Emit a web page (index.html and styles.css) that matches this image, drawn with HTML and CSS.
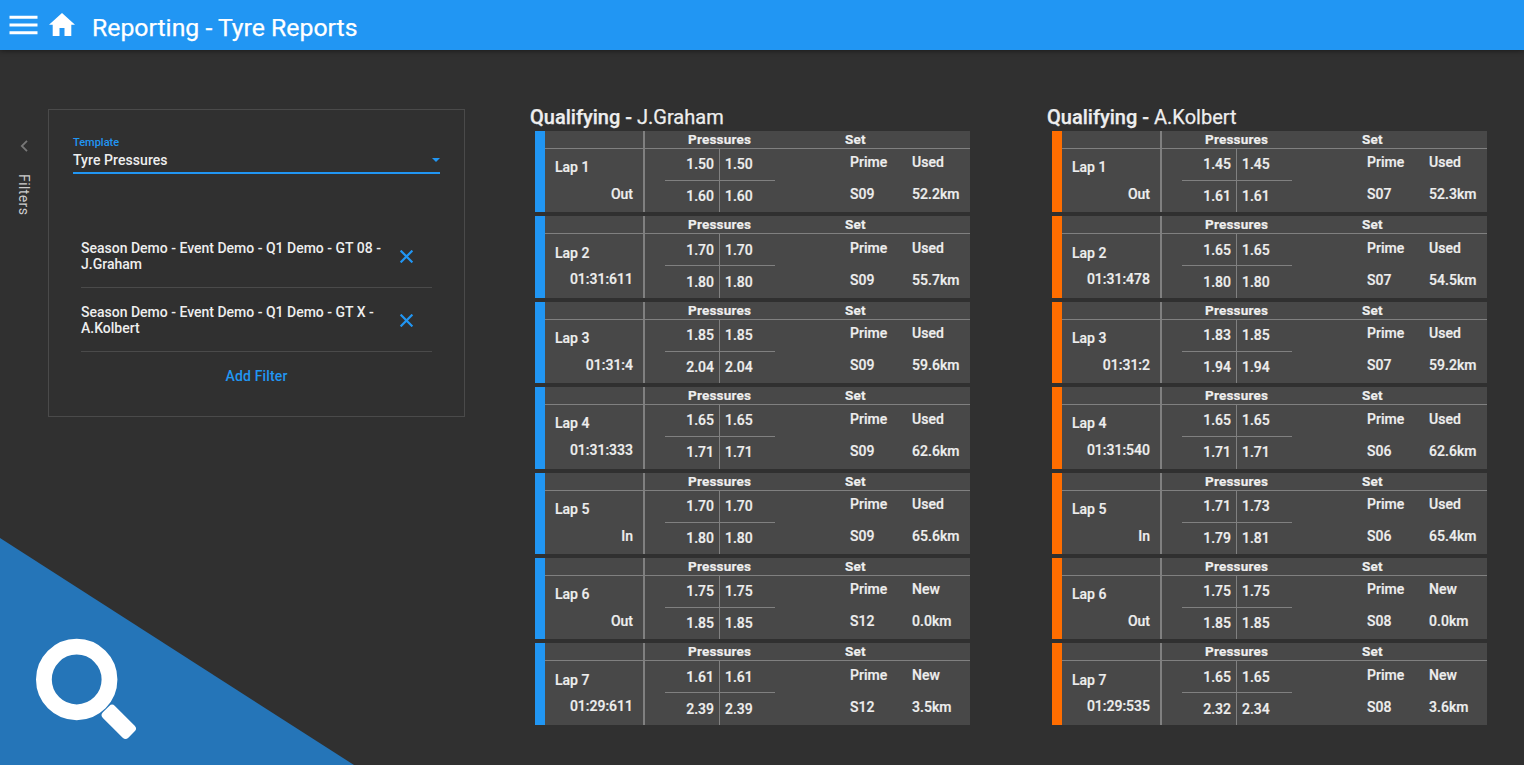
FILE: index.html
```html
<!DOCTYPE html>
<html lang="en">
<head>
<meta charset="utf-8">
<title>Reporting - Tyre Reports</title>
<link rel="stylesheet" href="styles.css">
</head>
<body>
<header class="topbar">
  <svg class="menu-icon" width="29" height="20" viewBox="0 0 29 20"><path d="M.5.7h28v3H.5zM.5 8.5h28v3H.5zM.5 16.3h28v3H.5z" fill="#fff"/></svg>
  <svg class="home-icon" width="26" height="23" viewBox="0 0 26 23"><path d="M13 0 0 11.8h3.7V23h6.8v-8h5v8h6.8V11.800H26z" fill="#fff"/></svg>
  <h1 class="title">Reporting - Tyre Reports</h1>
</header>
<main class="page">
  <aside class="rail">
    <svg width="8" height="12" viewBox="0 0 8 12"><path d="M7 .8 1.800 6 7 11.200" fill="none" stroke="#777" stroke-width="1.800"/></svg>
    <span class="rail-label">Filters</span>
  </aside>
  <section class="filters">
    <div class="select">
      <label class="select-label">Template</label>
      <div class="select-value"><span>Tyre Pressures</span><i class="caret"></i></div>
    </div>
    <ul class="filter-list">
      <li class="filter"><span class="filter-text">Season Demo - Event Demo - Q1 Demo - GT 08 - J.Graham</span><svg width="13" height="13" viewBox="0 0 13 13"><path d="M.6.6l11.800 11.800M12.400.6.6 12.400" stroke="#2196f3" stroke-width="2.200"/></svg></li>
      <li class="filter"><span class="filter-text">Season Demo - Event Demo - Q1 Demo - GT X - A.Kolbert</span><svg width="13" height="13" viewBox="0 0 13 13"><path d="M.6.6l11.800 11.800M12.400.6.6 12.400" stroke="#2196f3" stroke-width="2.200"/></svg></li>
    </ul>
    <div class="add">Add Filter</div>
  </section>
  <section class="report report-blue">
    <h2 class="driver"><b>Qualifying - </b>J.Graham</h2>
    <div class="laps" id="graham"></div>
  </section>
  <section class="report report-orange">
    <h2 class="driver"><b>Qualifying - </b>A.Kolbert</h2>
    <div class="laps" id="kolbert"></div>
  </section>
</main>
<svg class="corner" width="354" height="227" viewBox="0 0 354 227">
  <path d="M0 0 354 227H0z" fill="#2575b8"/>
  <circle cx="76.700" cy="141.500" r="32.800" fill="none" stroke="#fff" stroke-width="15.800"/>
  <rect x="-18" y="-8.500" width="36" height="17" rx="4" fill="#fff" transform="translate(118.800 183.800) rotate(45)"/>
</svg>
<script src="laps.js"></script>
</body>
</html>
```
FILE: styles.css
```css
* { box-sizing: border-box; }
body {
  margin: 0;
  height: 765px;
  overflow: hidden;
  background: #303030;
  color: #eee;
  font: 500 14px/16px Roboto, sans-serif;
}
.topbar {
  display: flex;
  height: 50px;
  padding-left: 9px;
  background: #2196f3;
  box-shadow: 0 1px 5px rgba(0, 0, 0, .45);
}
.menu-icon { margin-top: 15px; }
.home-icon { margin: 13px 0 0 11px; }
.title {
  margin: 12px 0 0 17px;
  color: #fff;
  font-size: 24.8px;
  font-weight: 400;
  -webkit-text-stroke: .25px #fff;
  line-height: 32px;
  white-space: nowrap;
}
.page { display: flex; align-items: flex-start; }
.rail {
  display: flex;
  flex-direction: column;
  align-items: center;
  width: 48px;
  padding-top: 90px;
}
.rail-label {
  margin: 22px 0 0;
  writing-mode: vertical-rl;
  color: #ccc;
  font-weight: 400;
  letter-spacing: .4px;
}
.filters {
  width: 417px;
  height: 308px;
  margin-top: 59px;
  padding: 27px 24px 0;
  border: 1px solid #4a4a4a;
}
.select { height: 37px; border-bottom: 2px solid #2196f3; }
.select-label {
  display: block;
  color: #2196f3;
  font-size: 11px;
  line-height: 12px;
}
.select-value {
  display: flex;
  justify-content: space-between;
  align-items: center;
  height: 22px;
  letter-spacing: .07px;
}
.caret {
  border: 4px solid transparent;
  border-top-color: #2196f3;
  border-bottom: 0;
}
.filter-list { margin: 50px 8px 0; padding: 0; list-style: none; }
.filter {
  display: flex;
  align-items: center;
  justify-content: space-between;
  height: 64px;
  padding: 0 19px 0 0;
  border-bottom: 1px solid #4a4a4a;
}
.filter svg { margin-top: 1px; }
.filter-text { width: 304px; }
.add { margin-top: 16px; color: #2196f3; text-align: center; letter-spacing: .15px; }
.report { width: 440px; margin: 54px 0 0 65px; }
.report-orange { margin-left: 77px; }
.driver {
  margin: 0;
  font-size: 20px;
  font-weight: 400;
  line-height: 27px;
  -webkit-text-stroke: .25px #eee;
}
.driver b { font-weight: 500; }
.laps { display: grid; gap: 4px; padding-left: 5px; -webkit-text-stroke: .2px #eee; }
.lap {
  display: grid;
  grid-template-columns: 100px 1fr;
  grid-template-rows: 100%;
  width: 435px;
  height: 81.4px;
  border-left: 10px solid #2196f3;
  background: #484848;
}
.report-orange .lap { border-color: #ff6d00; }
.lap-info { border-right: 2px solid #808080; }
.head { height: 18px; border-bottom: 1px solid #808080; font-size: 13.500px; line-height: 17px; font-weight: 700; letter-spacing: .22px; }
.name { padding: 10.300px 0 0 10px; }
.time { padding: 10.700px 10px 0 0; text-align: right; }
.lap-data .head { display: grid; grid-template-columns: 200px 1fr; }
.head span:first-child { padding-left: 43px; }
.values { display: grid; grid-template-columns: 110px 1fr; gap: 75px; padding-left: 20px; }
.pressures { display: grid; grid-template-columns: 55px 55px; grid-template-rows: 32px 31.4px; }
.pressures span { padding: 7.300px 5px 0; }
.pressures span:nth-child(odd) { border-right: 1px solid #808080; text-align: right; }
.pressures span:nth-child(-n+2) { border-bottom: 1px solid #808080; }
.set { display: grid; grid-template-columns: 62px 1fr; grid-template-rows: 32px 31.4px; height: 63px; padding-top: 5.400px; letter-spacing: .05px; }
.corner { position: absolute; left: 0; bottom: 0; }
```
FILE: laps.js
```js
const laps = {
  graham: [
    ["Out", "1.50 1.50 1.60 1.60", "Prime Used S09 52.2km"],
    ["01:31:611", "1.70 1.70 1.80 1.80", "Prime Used S09 55.7km"],
    ["01:31:4", "1.85 1.85 2.04 2.04", "Prime Used S09 59.6km"],
    ["01:31:333", "1.65 1.65 1.71 1.71", "Prime Used S09 62.6km"],
    ["In", "1.70 1.70 1.80 1.80", "Prime Used S09 65.6km"],
    ["Out", "1.75 1.75 1.85 1.85", "Prime New S12 0.0km"],
    ["01:29:611", "1.61 1.61 2.39 2.39", "Prime New S12 3.5km"]
  ],
  kolbert: [
    ["Out", "1.45 1.45 1.61 1.61", "Prime Used S07 52.3km"],
    ["01:31:478", "1.65 1.65 1.80 1.80", "Prime Used S07 54.5km"],
    ["01:31:2", "1.83 1.85 1.94 1.94", "Prime Used S07 59.2km"],
    ["01:31:540", "1.65 1.65 1.71 1.71", "Prime Used S06 62.6km"],
    ["In", "1.71 1.73 1.79 1.81", "Prime Used S06 65.4km"],
    ["Out", "1.75 1.75 1.85 1.85", "Prime New S08 0.0km"],
    ["01:29:535", "1.65 1.65 2.32 2.34", "Prime New S08 3.6km"]
  ]
};
const cells = text => text.split(" ").map(v => `<span>${v}</span>`).join("");
for (const [id, rows] of Object.entries(laps)) {
  document.getElementById(id).innerHTML = rows.map(([time, pressures, set], i) => `
    <article class="lap">
      <div class="lap-info"><div class="head"></div><div class="name">Lap ${i + 1}</div><div class="time">${time}</div></div>
      <div class="lap-data">
        <div class="head"><span>Pressures</span><span>Set</span></div>
        <div class="values"><div class="pressures">${cells(pressures)}</div><div class="set">${cells(set)}</div></div>
      </div>
    </article>`).join("");
}
```
